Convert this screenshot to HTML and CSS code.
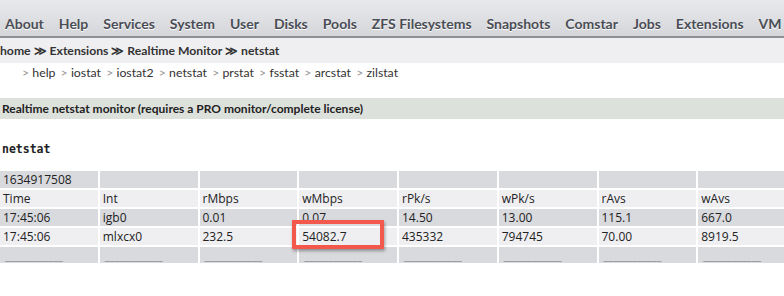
FILE: index.html
```html
<!DOCTYPE html>
<html lang="en">
<head>
    <meta charset="UTF-8">
    <title>Realtime Monitor - netstat</title>
    <link rel="stylesheet" href="styles.css">
</head>
<body>

<div class="menu">
    <a href="#">About</a>
    <a href="#">Help</a>
    <a href="#">Services</a>
    <a href="#">System</a>
    <a href="#">User</a>
    <a href="#">Disks</a>
    <a href="#">Pools</a>
    <a href="#">ZFS Filesystems</a>
    <a href="#">Snapshots</a>
    <a href="#">Comstar</a>
    <a href="#">Jobs</a>
    <a href="#">Extensions</a>
    <a href="#">VM</a>
</div>

<div class="crumbs">home &#8811; Extensions &#8811; Realtime Monitor &#8811; netstat</div>

<div class="subnav">
    <span class="sep">&gt;</span> help
    <span class="sep">&gt;</span> iostat
    <span class="sep">&gt;</span> iostat2
    <span class="sep">&gt;</span> netstat
    <span class="sep">&gt;</span> prstat
    <span class="sep">&gt;</span> fsstat
    <span class="sep">&gt;</span> arcstat
    <span class="sep">&gt;</span> zilstat
</div>

<div class="titlebar">Realtime netstat monitor (requires a PRO monitor/complete license)</div>

<div class="monname">netstat</div>

<div class="wrap">
    <table class="stats">
        <tr class="dark"><td>1634917508</td><td></td><td></td><td></td><td></td><td></td><td></td><td></td></tr>
        <tr class="light"><td>Time</td><td>Int</td><td>rMbps</td><td>wMbps</td><td>rPk/s</td><td>wPk/s</td><td>rAvs</td><td>wAvs</td></tr>
        <tr class="dark"><td>17:45:06</td><td>igb0</td><td>0.01</td><td>0.07</td><td>14.50</td><td>13.00</td><td>115.1</td><td>667.0</td></tr>
        <tr class="light"><td>17:45:06</td><td>mlxcx0</td><td>232.5</td><td>54082.7</td><td>435332</td><td>794745</td><td>70.00</td><td>8919.5</td></tr>
        <tr class="dark under"><td>____________</td><td>____________</td><td>____________</td><td>____________</td><td>____________</td><td>____________</td><td>____________</td><td>____________</td></tr>
    </table>
    <div class="mark"></div>
</div>

</body>
</html>
```

FILE: styles.css
```css
body {
    margin: 0;
    font-family: Lato, "Open Sans", sans-serif;
    color: #222;
    background: #fff;
    overflow: hidden;
}
.menu {
    height: 38px;
    display: flex;
    align-items: center;
    gap: 0 15px;
    padding: 11px 0 0 5px;
    box-sizing: border-box;
    background: linear-gradient(#e8e9ec, #d5d6da);
    border-bottom: 2px solid #8e9095;
    white-space: nowrap;
}
.menu a {
    color: #4a4d55;
    text-decoration: none;
    font-weight: bold;
    font-size: 14px;
    text-shadow: 0 1px 0 #fff;
}
.crumbs {
    height: 25px;
    line-height: 25px;
    background: #efeff2;
    font-size: 12.2px;
    font-weight: bold;
    color: #333;
}
.subnav {
    height: 22px;
    line-height: 20px;
    padding-left: 20px;
    font-size: 12.3px;
    color: #333;
}
.subnav .sep {
    color: #999;
    margin-left: 2px;
}
.titlebar {
    margin-top: 13px;
    height: 21px;
    line-height: 21px;
    background: #dde1dc;
    font-size: 12px;
    font-weight: bold;
    color: #222;
    padding-left: 2px;
}
.monname {
    margin-top: 23px;
    font-family: "DejaVu Sans Mono", monospace;
    font-weight: bold;
    font-size: 11.5px;
    padding-left: 2px;
    height: 27px;
}
.wrap {
    position: relative;
}
.stats {
    border-spacing: 2px;
    margin: 0 -2px;
    width: calc(100% + 16px);
    table-layout: fixed;
    font-family: "Open Sans", sans-serif;
    font-size: 12px;
}
.stats td {
    height: 16px;
    padding: 0 0 0 3px;
    white-space: nowrap;
    overflow: hidden;
}
.stats tr.dark td {
    background: #d9dade;
}
.stats tr.light td {
    background: #efeff2;
}
.stats tr.under td {
    color: #8a8b90;
    padding-left: 5px;
    font-size: 11px;
}
.mark {
    position: absolute;
    left: 292px;
    top: 51px;
    width: 84px;
    height: 21px;
    border: 4px solid #f2584b;
    box-shadow: 1px 2px 3px rgba(0,0,0,0.35);
}
```
